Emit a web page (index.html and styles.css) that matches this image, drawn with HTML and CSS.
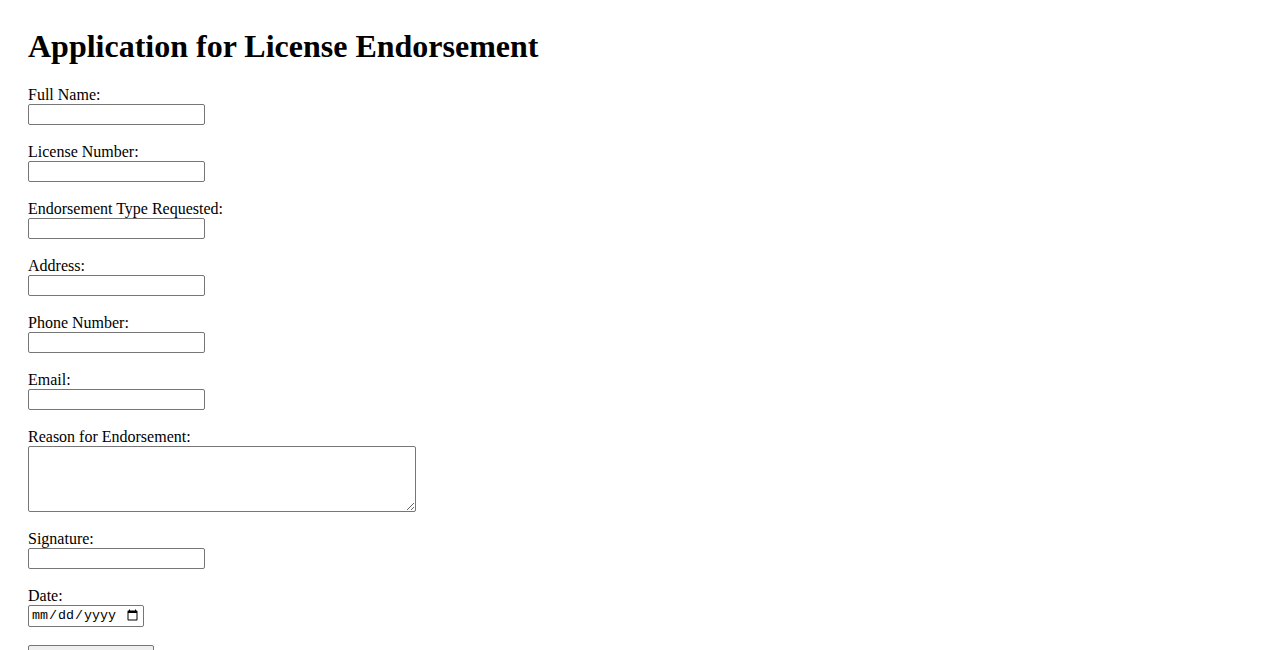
FILE: index.html
```html
<!DOCTYPE html>
<html lang="en">
<head>
<meta charset="utf-8">
<title>Application for License Endorsement</title>
<link rel="stylesheet" href="styles.css">
</head>
<body>
<div class="page">
  <h1 class="title">Application for License Endorsement</h1>
  <form class="form">
    <div class="field">
      <label class="label" for="fullname">Full Name:</label>
      <input class="text-input" type="text" id="fullname">
    </div>
    <div class="field">
      <label class="label" for="license">License Number:</label>
      <input class="text-input" type="text" id="license">
    </div>
    <div class="field">
      <label class="label" for="etype">Endorsement Type Requested:</label>
      <input class="text-input" type="text" id="etype">
    </div>
    <div class="field">
      <label class="label" for="address">Address:</label>
      <input class="text-input" type="text" id="address">
    </div>
    <div class="field">
      <label class="label" for="phone">Phone Number:</label>
      <input class="text-input" type="tel" id="phone">
    </div>
    <div class="field">
      <label class="label" for="email">Email:</label>
      <input class="text-input" type="email" id="email">
    </div>
    <div class="field">
      <label class="label" for="reason">Reason for Endorsement:</label>
      <textarea class="text-area" id="reason"></textarea>
    </div>
    <div class="field">
      <label class="label" for="signature">Signature:</label>
      <input class="text-input" type="text" id="signature">
    </div>
    <div class="field">
      <label class="label" for="date">Date:</label>
      <input class="date-input" type="date" id="date">
    </div>
    <div class="field">
      <button class="submit" type="submit">Submit Application</button>
    </div>
  </form>
</div>
</body>
</html>
```
FILE: styles.css
```css
html, body {
  margin: 0;
  padding: 0;
  background: #ffffff;
}
body {
  font-family: "Liberation Serif", "Times New Roman", serif;
  font-size: 16px;
  color: #000000;
}
.page {
  padding: 28px 28px 20px 28px;
}
.title {
  margin: 0 0 21px 0;
  font-size: 32px;
  line-height: 37px;
  font-weight: bold;
}
.form {
  display: flex;
  flex-direction: column;
  align-items: flex-start;
}
.field {
  display: flex;
  flex-direction: column;
  align-items: flex-start;
  margin-bottom: 18px;
}
.label {
  display: block;
  line-height: 18px;
  margin-bottom: 0;
}
.text-input {
  box-sizing: border-box;
  width: 177px;
  height: 21px;
  margin: 0;
  padding: 1px 2px;
  border: 1px solid #767676;
  border-radius: 2px;
  font-family: "Liberation Sans", Arial, sans-serif;
  font-size: 13.33px;
  background: #ffffff;
}
.text-area {
  box-sizing: border-box;
  width: 388px;
  height: 66px;
  margin: 0;
  padding: 2px;
  border: 1px solid #767676;
  border-radius: 2px;
  font-family: "Liberation Mono", monospace;
  font-size: 13.33px;
  resize: both;
}
.date-input {
  box-sizing: border-box;
  width: 116px;
  height: 22px;
  margin: 0;
  padding: 1px 2px;
  border: 1px solid #767676;
  border-radius: 2px;
  font-family: "Liberation Mono", monospace;
  font-size: 13.33px;
  background: #ffffff;
}
.submit {
  box-sizing: border-box;
  width: 126px;
  height: 22px;
  margin: 0;
  padding: 1px 6px;
  border: 1px solid #767676;
  border-radius: 2px;
  background: #efefef;
  font-family: "Liberation Sans", Arial, sans-serif;
  font-size: 13.33px;
  color: #000000;
}
```
